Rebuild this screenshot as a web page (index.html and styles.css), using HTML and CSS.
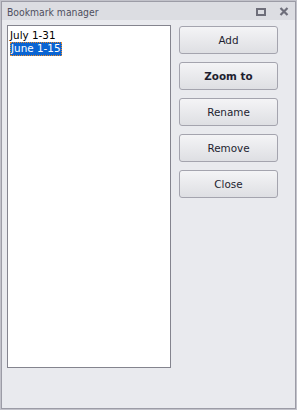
FILE: index.html
```html
<!DOCTYPE html>
<html>
<head>
<meta charset="utf-8">
<link rel="stylesheet" href="styles.css">
</head>
<body>
<div class="window">
  <div class="frame">
    <div class="titlebar">
      <span class="title">Bookmark manager</span>
      <span class="tb-icons">
        <svg class="ico" width="10" height="8" viewBox="0 0 10 8"><rect x="1" y="1" width="8" height="6" fill="none" stroke="#6e6e7a" stroke-width="2"/></svg>
        <svg class="ico close" width="10" height="9" viewBox="0 0 10 9"><path d="M1.5 1 L8.5 8 M8.5 1 L1.5 8" stroke="#6e6e7a" stroke-width="2.2"/></svg>
      </span>
    </div>
    <div class="body">
      <div class="list">
        <div class="item">July 1-31</div>
        <div class="item"><span class="sel">June 1-15</span></div>
      </div>
      <div class="buttons">
        <button class="btn">Add</button>
        <button class="btn bold">Zoom to</button>
        <button class="btn">Rename</button>
        <button class="btn">Remove</button>
        <button class="btn">Close</button>
      </div>
    </div>
  </div>
</div>
</body>
</html>
```
FILE: styles.css
```css
html, body { margin: 0; padding: 0; }
body { font-family: Tahoma, "DejaVu Sans", sans-serif; font-size: 11px; }
.window {
  width: 297px; height: 410px; box-sizing: border-box;
  border: 1px solid #c2c2ca; background: #e9eaee;
}
.frame {
  height: 100%; box-sizing: border-box;
  border: 1px solid #9c9ca6;
  display: flex; flex-direction: column;
}
.titlebar {
  height: 18px; background: #dcdde2;
  display: flex; align-items: center; justify-content: space-between;
  padding: 0 4px 0 5px;
}
.title { color: #4e4e5e; font-family: "DejaVu Sans Condensed", "DejaVu Sans", sans-serif; font-stretch: condensed; font-size: 10.3px; padding-top: 1px; }
.tb-icons { display: flex; align-items: center; gap: 13px; padding-right: 2px; padding-top: 1px; }
.ico { display: block; }
.body {
  flex: 1; display: flex; align-items: flex-start; gap: 8px;
  padding: 5px 0 0 5px;
}
.list {
  width: 164px; height: 343px; box-sizing: border-box;
  border: 1px solid #84848e; background: #fff;
  padding: 3px 1px;
  font-family: "DejaVu Sans", sans-serif; font-size: 10.4px;
}
.item { height: 13px; line-height: 13px; padding-left: 1px; color: #000; }
.sel {
  display: inline-block; background: #0a64d2; color: #fff;
  padding: 0 1px; height: 14px; line-height: 13px; box-sizing: border-box;
  outline: 1px dotted #e88a2a; outline-offset: -1px;
}
.buttons { display: flex; flex-direction: column; gap: 8px; margin-top: 1px; }
.btn {
  width: 99px; height: 28px; box-sizing: border-box;
  border: 1px solid #a4a4ae; border-radius: 3px;
  background: linear-gradient(#f4f4f6, #dedfe3);
  font-family: "DejaVu Sans", sans-serif; font-size: 10.4px; color: #1e1e30;
  padding: 0; margin: 0;
}
.btn.bold { font-weight: bold; }
```
